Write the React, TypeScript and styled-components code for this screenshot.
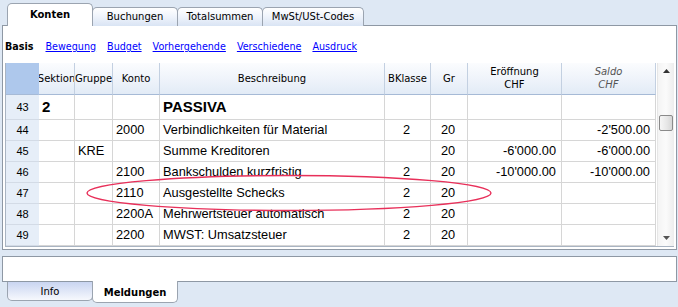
import React from 'react';
import styled, { createGlobalStyle, css } from 'styled-components';

const GlobalStyle = createGlobalStyle`
  html, body {
    margin: 0;
    padding: 0;
    background: #dee8f4;
  }
  body {
    font-family: "DejaVu Sans", "Liberation Sans", sans-serif;
  }
`;

const COLS = [33, 36, 38, 47, 225, 46, 37, 94, 94];
const colTemplate = COLS.map((w) => `${w}px`).join(' ');

const Screen = styled.div`
  width: 678px;
  height: 307px;
  display: flex;
  flex-direction: column;
  overflow: hidden;
`;

const TabStrip = styled.div<{ $bottom?: boolean }>`
  display: flex;
  align-items: ${(p) => (p.$bottom ? 'flex-start' : 'flex-end')};
  padding-left: 7px;
  height: ${(p) => (p.$bottom ? '25px' : '26px')};
  position: relative;
  z-index: 2;
  margin-bottom: ${(p) => (p.$bottom ? '0' : '-1px')};
`;

const Tab = styled.div<{ $active?: boolean; $bottom?: boolean }>`
  box-sizing: border-box;
  width: 86px;
  display: flex;
  align-items: center;
  justify-content: center;
  font-size: 10px;
  color: #000;
  border: 1px solid #9ba4b0;
  ${(p) =>
    p.$bottom
      ? css`
          border-top: none;
          border-radius: 0 0 5px 5px;
          height: ${p.$active ? '22px' : '19px'};
          background: ${p.$active
            ? '#fff'
            : 'linear-gradient(180deg, #c9d5f1 0%, #e4eaf8 60%, #f6f8fd 100%)'};
          margin-top: ${p.$active ? '-1px' : '0'};
          padding-top: ${p.$active ? '2px' : '0'};
        `
      : css`
          border-bottom: none;
          border-radius: 5px 5px 0 0;
          height: ${p.$active ? '23px' : '19px'};
          background: ${p.$active
            ? '#fff'
            : 'linear-gradient(180deg, #ffffff 0%, #eef3fb 50%, #d9e4f4 100%)'};
          padding-top: ${p.$active ? '0' : '0'};
          padding-bottom: ${p.$active ? '1px' : '0'};
        `}
  font-weight: ${(p) => (p.$active ? 'bold' : 'normal')};
  & + & {
    margin-left: -1px;
  }
`;

const WideTab = styled(Tab)`
  width: 102px;
`;

const Panel = styled.div`
  box-sizing: border-box;
  margin: 0 1px 0 2px;
  height: 226px;
  border: 1px solid #8e98a4;
  background: #fff;
  display: flex;
  flex-direction: column;
  position: relative;
  z-index: 1;
`;

const LinkRow = styled.div`
  height: 37px;
  display: flex;
  align-items: center;
  padding-left: 2px;
  padding-top: 4px;
  box-sizing: border-box;
  font-size: 9.6px;
`;

const CurrentView = styled.span`
  font-weight: bold;
  margin-right: 12px;
`;

const ViewLink = styled.a`
  color: #0000ff;
  text-decoration: underline;
  margin-right: 11px;
  cursor: pointer;
`;

const GridFrame = styled.div`
  margin-left: 2px;
  width: 669px;
  height: 184px;
  box-sizing: border-box;
  border-left: 1px solid #a9b4c2;
  border-bottom: 1px solid #a9b4c2;
  display: flex;
  position: relative;
`;

const Table = styled.div`
  display: grid;
  grid-template-columns: ${colTemplate};
  grid-template-rows: 32px 25px repeat(6, 21px);
  align-content: start;
  width: 651px;
`;

const HeadCell = styled.div<{ $italic?: boolean; $corner?: boolean }>`
  box-sizing: border-box;
  display: flex;
  align-items: center;
  justify-content: center;
  text-align: center;
  white-space: nowrap;
  overflow: hidden;
  font-size: 10px;
  line-height: 13px;
  color: ${(p) => (p.$italic ? '#555' : '#000')};
  font-style: ${(p) => (p.$italic ? 'italic' : 'normal')};
  background: ${(p) =>
    p.$corner ? '#aec8ec' : 'linear-gradient(180deg, #fbfcfe 0%, #eef3fa 55%, #e2ebf6 100%)'};
  border-right: 1px solid ${(p) => (p.$corner ? '#aec8ec' : '#c3d0e1')};
  border-bottom: 1px solid #a6bad6;
`;

const RowNum = styled.div`
  box-sizing: border-box;
  display: flex;
  align-items: center;
  justify-content: center;
  background: #e6eef8;
  font-family: "Liberation Sans", sans-serif;
  font-size: 11px;
  border-bottom: 1px solid #d3dbe6;
`;

const Cell = styled.div<{ $align?: 'left' | 'center' | 'right'; $bold?: boolean }>`
  box-sizing: border-box;
  display: flex;
  align-items: center;
  justify-content: ${(p) =>
    p.$align === 'right' ? 'flex-end' : p.$align === 'center' ? 'center' : 'flex-start'};
  padding: 0 5px 0 3px;
  white-space: nowrap;
  overflow: hidden;
  font-family: "Liberation Sans", Arial, sans-serif;
  font-size: ${(p) => (p.$bold ? '15px' : '12.8px')};
  font-weight: ${(p) => (p.$bold ? 'bold' : 'normal')};
  border-right: 1px solid #d6d6d6;
  border-bottom: 1px solid #d6d6d6;
  color: #000;
`;

const ScrollBar = styled.div`
  width: 17px;
  display: flex;
  flex-direction: column;
  align-items: center;
  background: linear-gradient(90deg, #f4f4f4 0%, #fbfbfb 50%, #ededed 100%);
  border-left: 1px solid #e6e6e6;
  box-sizing: border-box;
`;

const ArrowBtn = styled.div`
  height: 16px;
  width: 100%;
  display: flex;
  align-items: center;
  justify-content: center;
`;

const Thumb = styled.div<{ $top: number }>`
  margin-top: ${(p) => p.$top}px;
  width: 14px;
  height: 16px;
  box-sizing: border-box;
  border: 1px solid #8a8a8a;
  border-radius: 2px;
  background: linear-gradient(90deg, #f6f6f6 0%, #e6e6e6 60%, #d6d6d6 100%);
`;

const Spacer = styled.div`
  flex: 1;
`;

const Marking = styled.svg`
  position: absolute;
  left: 0;
  top: 0;
  pointer-events: none;
  overflow: visible;
`;

const InfoPanel = styled.div`
  box-sizing: border-box;
  margin: 6px 1px 0 2px;
  height: 26px;
  border: 1px solid #8e98a4;
  background: #fff;
  position: relative;
  z-index: 1;
`;

type Row = {
  n: number;
  sek?: string;
  grp?: string;
  konto?: string;
  desc: string;
  bk?: string;
  gr?: string;
  open?: string;
  saldo?: string;
  bold?: boolean;
};

const rows: Row[] = [
  { n: 43, sek: '2', desc: 'PASSIVA', bold: true },
  { n: 44, konto: '2000', desc: 'Verbindlichkeiten für Material', bk: '2', gr: '20', saldo: '-2\'500.00' },
  { n: 45, grp: 'KRE', desc: 'Summe Kreditoren', gr: '20', open: '-6\'000.00', saldo: '-6\'000.00' },
  { n: 46, konto: '2100', desc: 'Bankschulden kurzfristig', bk: '2', gr: '20', open: '-10\'000.00', saldo: '-10\'000.00' },
  { n: 47, konto: '2110', desc: 'Ausgestellte Schecks', bk: '2', gr: '20' },
  { n: 48, konto: '2200A', desc: 'Mehrwertsteuer automatisch', bk: '2', gr: '20' },
  { n: 49, konto: '2200', desc: 'MWST: Umsatzsteuer', bk: '2', gr: '20' },
];

const UpArrow = () => (
  <svg width="7" height="4" viewBox="0 0 7 4">
    <path d="M0 4 L3.5 0 L7 4 Z" fill="#333" />
  </svg>
);

const DownArrow = () => (
  <svg width="7" height="4" viewBox="0 0 7 4">
    <path d="M0 0 L3.5 4 L7 0 Z" fill="#555" />
  </svg>
);

const App = () => {
  return (
    <Screen>
      <GlobalStyle />
      <TabStrip>
        <Tab $active>Konten</Tab>
        <Tab>Buchungen</Tab>
        <Tab>Totalsummen</Tab>
        <WideTab>MwSt/USt-Codes</WideTab>
      </TabStrip>

      <Panel>
        <LinkRow>
          <CurrentView>Basis</CurrentView>
          <ViewLink>Bewegung</ViewLink>
          <ViewLink>Budget</ViewLink>
          <ViewLink>Vorhergehende</ViewLink>
          <ViewLink>Verschiedene</ViewLink>
          <ViewLink>Ausdruck</ViewLink>
        </LinkRow>

        <GridFrame>
          <Table>
            <HeadCell $corner />
            <HeadCell>Sektion</HeadCell>
            <HeadCell>Gruppe</HeadCell>
            <HeadCell>Konto</HeadCell>
            <HeadCell>Beschreibung</HeadCell>
            <HeadCell>BKlasse</HeadCell>
            <HeadCell>Gr</HeadCell>
            <HeadCell>
              Eröffnung
              <br />
              CHF
            </HeadCell>
            <HeadCell $italic>
              Saldo
              <br />
              CHF
            </HeadCell>

            {rows.map((r) => (
              <React.Fragment key={r.n}>
                <RowNum>{r.n}</RowNum>
                <Cell $bold={r.bold}>{r.sek}</Cell>
                <Cell>{r.grp}</Cell>
                <Cell>{r.konto}</Cell>
                <Cell $bold={r.bold}>{r.desc}</Cell>
                <Cell $align="center">{r.bk}</Cell>
                <Cell $align="center">{r.gr}</Cell>
                <Cell $align="right">{r.open}</Cell>
                <Cell $align="right">{r.saldo}</Cell>
              </React.Fragment>
            ))}
          </Table>

          <ScrollBar>
            <ArrowBtn>
              <UpArrow />
            </ArrowBtn>
            <Thumb $top={36} />
            <Spacer />
            <ArrowBtn>
              <DownArrow />
            </ArrowBtn>
          </ScrollBar>

          {/* hand-drawn highlight around row 47 */}
          <Marking width="669" height="184">
            <ellipse cx="283" cy="130" rx="202" ry="17.5" fill="none" stroke="#e8305a" strokeWidth="1.4" />
          </Marking>
        </GridFrame>
      </Panel>

      <InfoPanel />

      <TabStrip $bottom>
        <Tab $bottom>Info</Tab>
        <Tab $bottom $active>
          Meldungen
        </Tab>
      </TabStrip>
    </Screen>
  );
};

export default App;
